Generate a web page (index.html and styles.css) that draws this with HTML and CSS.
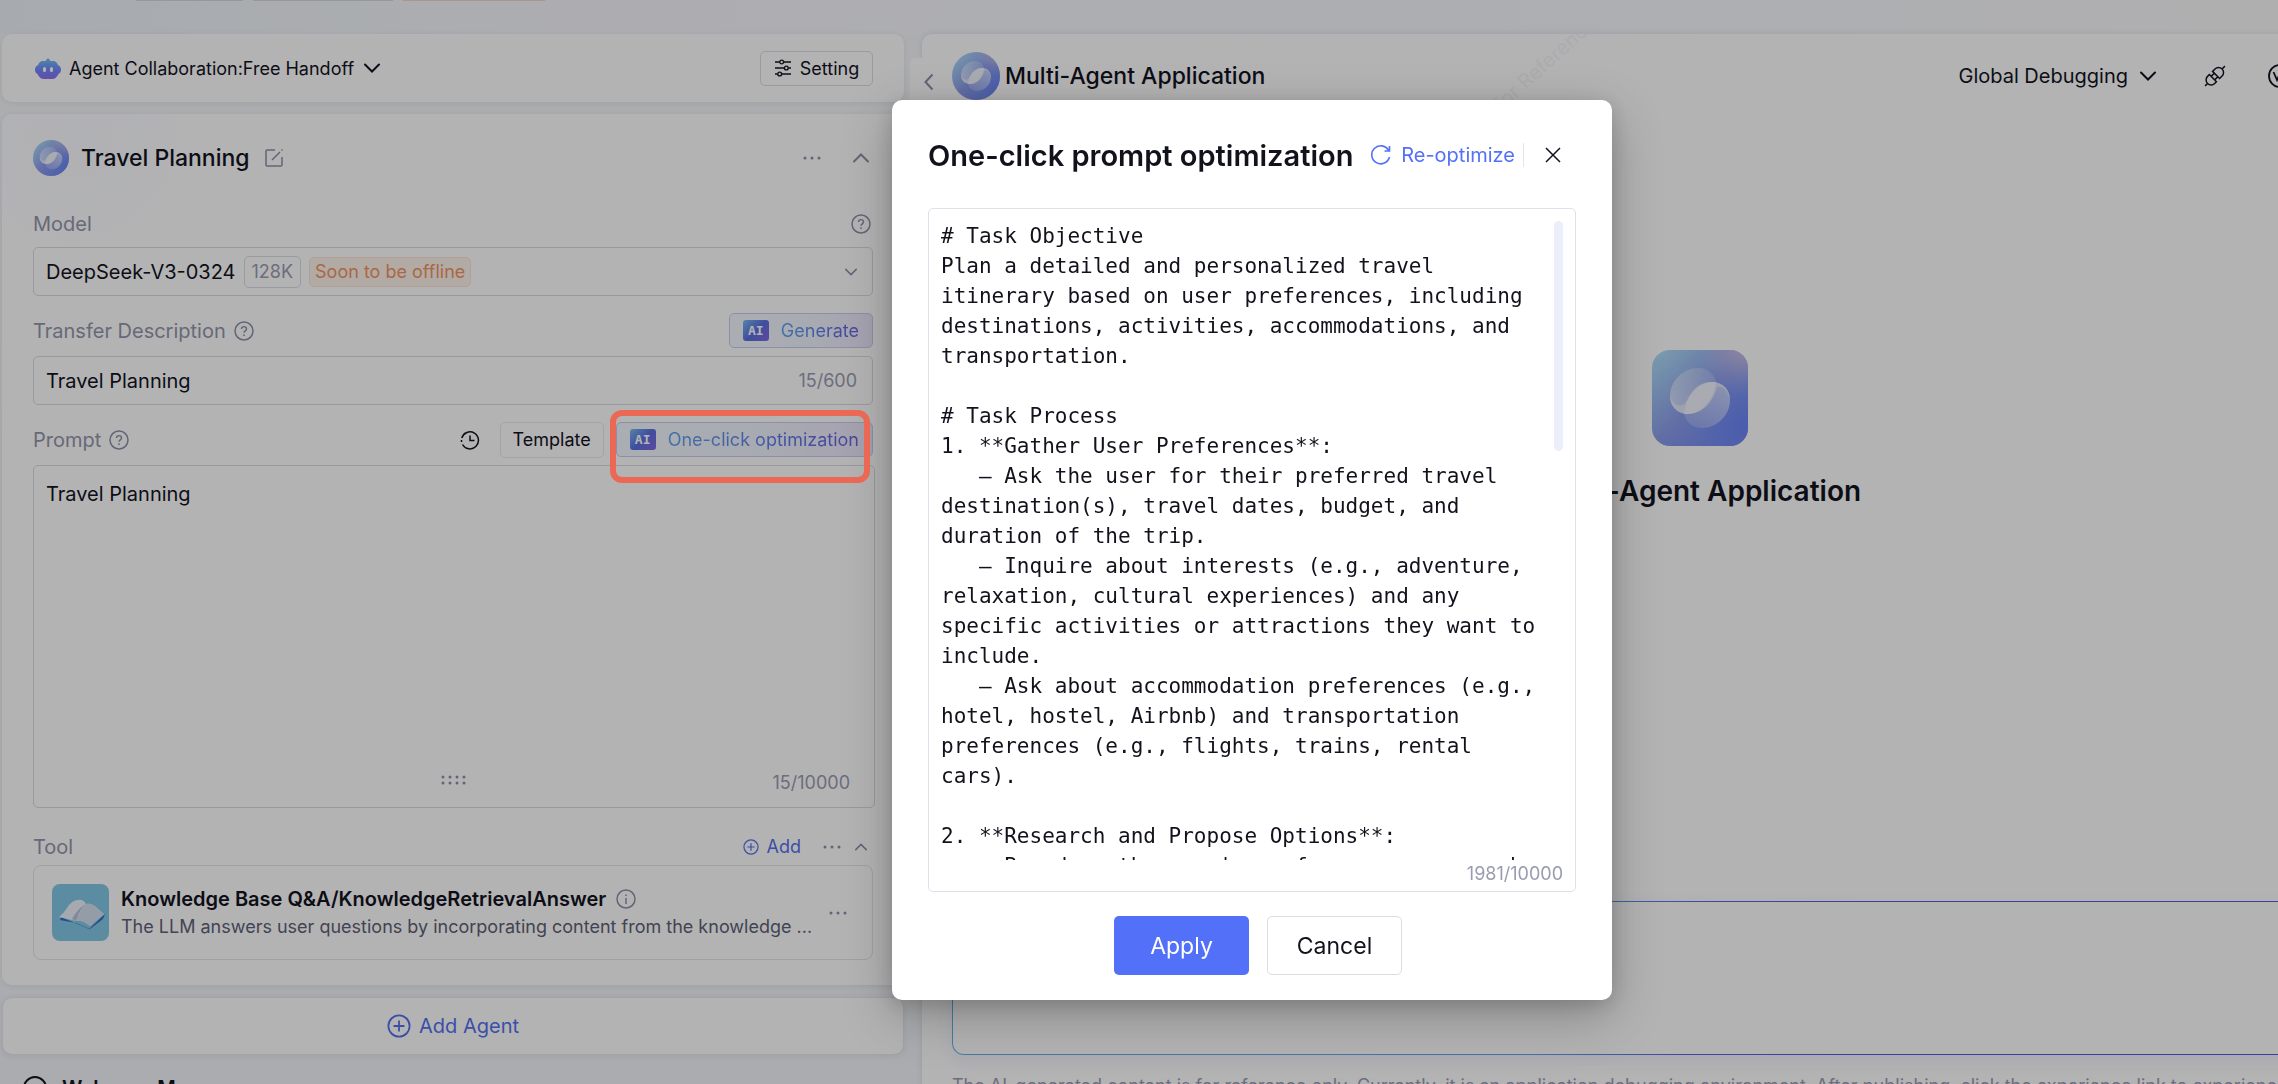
FILE: index.html
```html
<!DOCTYPE html>
<html lang="en">
<head>
  <meta charset="UTF-8">
  <title>Multi-Agent Application</title>
  <link rel="stylesheet" href="styles.css">
</head>
<body>

<!-- shared icons -->
<svg class="defs" aria-hidden="true">
  <defs>
    <linearGradient id="gBase" x1="0" y1="0" x2="1" y2="1">
      <stop offset="0" stop-color="#b0e4f8"/>
      <stop offset=".5" stop-color="#8c9dea"/>
      <stop offset="1" stop-color="#6a7cf2"/>
    </linearGradient>
    <radialGradient id="gPink" cx="1" cy="0" r=".5">
      <stop offset="0" stop-color="#cdbfe4"/>
      <stop offset="1" stop-color="#cdbfe4" stop-opacity="0"/>
    </radialGradient>
    <radialGradient id="gBlue" cx=".95" cy=".8" r=".75">
      <stop offset="0" stop-color="#6a83f6"/>
      <stop offset="1" stop-color="#7f9ff0" stop-opacity="0"/>
    </radialGradient>
    <linearGradient id="gUp" x1="0" y1="1" x2="1" y2="0">
      <stop offset="0" stop-color="#fff" stop-opacity=".6"/>
      <stop offset="1" stop-color="#fff" stop-opacity=".15"/>
    </linearGradient>
    <linearGradient id="gDown" x1="1" y1="0" x2="0" y2="1">
      <stop offset="0" stop-color="#fff" stop-opacity=".6"/>
      <stop offset="1" stop-color="#fff" stop-opacity=".15"/>
    </linearGradient>
    <linearGradient id="gBot" x1="0" y1="0" x2="0" y2="1">
      <stop offset="0" stop-color="#71b5f0"/>
      <stop offset=".5" stop-color="#7086ff"/>
      <stop offset="1" stop-color="#8a72ee"/>
    </linearGradient>
    <symbol id="logo" viewBox="0 0 96 96">
      <rect width="96" height="96" fill="url(#gBase)"/>
      <rect width="96" height="96" fill="url(#gPink)"/>
      <rect width="96" height="96" fill="url(#gBlue)"/>
      <path d="M64 32C62 24 56 18 46 18C31 18 18 31 18 46C18 56 25 64 36 64C50 64 62 50 64 32Z" fill="url(#gUp)"/>
      <path d="M32 64C34 72 40 78 50 78C65 78 78 65 78 50C78 40 71 32 60 32C46 32 34 46 32 64Z" fill="url(#gDown)"/>
      <path d="M18 46C18 56 25 64 36 64C52 64 62 50 65 37C70 35 76 40 78 50C78 40 71 32 60 32C47 32 40 40 35 50C31 58 22 58 18 46Z" fill="#fff" fill-opacity=".45"/>
      <path d="M64 32C62 50 50 64 36 64L32 64C34 46 46 32 60 32Z" fill="#fff" fill-opacity=".45"/>
    </symbol>
    <symbol id="help" viewBox="0 0 20 20">
      <circle cx="10" cy="10" r="9" fill="none" stroke="currentColor" stroke-width="1.5"/>
      <path d="M7.5 8C7.5 4.8 12.5 4.8 12.5 8C12.5 9.8 10 9.9 10 11.8" fill="none" stroke="currentColor" stroke-width="1.4"/>
      <circle cx="10" cy="14.2" r=".9" fill="currentColor"/>
    </symbol>
    <symbol id="down" viewBox="0 0 16 10">
      <path d="M1 1.5L8 8.5L15 1.5" fill="none" stroke="currentColor" stroke-width="2" stroke-linecap="round"/>
    </symbol>
    <symbol id="up" viewBox="0 0 16 10">
      <path d="M1 8.5L8 1.5L15 8.5" fill="none" stroke="currentColor" stroke-width="2" stroke-linecap="round"/>
    </symbol>
    <symbol id="dots" viewBox="0 0 18 4">
      <circle cx="2" cy="2" r="1.5"/><circle cx="9" cy="2" r="1.5"/><circle cx="16" cy="2" r="1.5"/>
    </symbol>
    <symbol id="plus" viewBox="0 0 24 24">
      <g fill="none" stroke="currentColor" stroke-width="1.8"><circle cx="12" cy="12" r="10.6"/><path d="M12 6.5V17.5M6.5 12H17.5"/></g>
    </symbol>
  </defs>
</svg>

<header class="topbar">
  <span class="top-tag tag-a"></span>
  <span class="top-tag tag-b"></span>
  <span class="top-tag tag-c"></span>
</header>

<main class="layout">
  <section class="left">
    <div class="card mode-bar">
      <button class="plain mode">
        <svg class="bot" viewBox="0 0 26 21"><path d="M11 2Q13 -1 15 2V4H11Z" fill="#71b5f0"/><path d="M8 3H18C21 3 22 5 23 7C25.5 8 26 10 26 12C26 14 25 15 23.5 16C22 19 20 21 17 21H9C6 21 4 19 2.5 16C1 15 0 14 0 12C0 10 .5 8 3 7C4 5 5 3 8 3Z" fill="url(#gBot)"/><rect x="8" y="9" width="3" height="5" rx="1.5" fill="#fff"/><rect x="15" y="9" width="3" height="5" rx="1.5" fill="#fff"/></svg>
        <span>Agent Collaboration:Free Handoff</span>
        <svg class="chev"><use href="#down"/></svg>
      </button>
      <button class="btn setting">
        <svg viewBox="0 0 18 18" width="18" height="18" fill="none" stroke="currentColor" stroke-width="1.4"><path d="M1 3H5.5M10 3H17M1 9H10M14.5 9H17M1 15H3.5M8 15H17"/><circle cx="7.7" cy="3" r="1.9"/><circle cx="12.3" cy="9" r="1.9"/><circle cx="5.7" cy="15" r="1.9"/></svg>
        Setting
      </button>
    </div>

    <div class="card agent">
      <div class="row agent-head">
        <svg class="avatar"><use href="#logo"/></svg>
        <h2>Travel Planning</h2>
        <svg class="muted" viewBox="0 0 20 20" width="20" height="20" fill="none" stroke="currentColor" stroke-width="1.5"><path d="M11 2H3Q2 2 2 3V17Q2 18 3 18H17Q18 18 18 17V9M8 12L16 4M17.5 2.5L18.5 1.5"/></svg>
        <span class="grow"></span>
        <button class="icon-btn" aria-label="More"><svg class="dots"><use href="#dots"/></svg></button>
        <button class="icon-btn" aria-label="Collapse"><svg class="chev"><use href="#up"/></svg></button>
      </div>

      <div class="row label-row model-label">
        <label for="model">Model</label>
        <span class="grow"></span>
        <svg class="help last"><use href="#help"/></svg>
      </div>
      <button class="field model" id="model">
        <span>DeepSeek-V3-0324</span>
        <span class="chip">128K</span>
        <span class="chip warn">Soon to be offline</span>
        <span class="grow"></span>
        <svg class="chev small"><use href="#down"/></svg>
      </button>

      <div class="row label-row">
        <label for="desc">Transfer Description</label>
        <svg class="help"><use href="#help"/></svg>
        <span class="grow"></span>
        <button class="ai-btn"><span class="ai">AI</span><span class="ai-text">Generate</span></button>
      </div>
      <div class="field desc">
        <input id="desc" type="text" value="Travel Planning">
        <span class="count">15/600</span>
      </div>

      <div class="row label-row">
        <label for="prompt">Prompt</label>
        <svg class="help"><use href="#help"/></svg>
        <span class="grow"></span>
        <button class="icon-btn history" aria-label="History"><svg viewBox="0 0 20 20" width="20" height="20" fill="none" stroke="currentColor" stroke-width="1.5"><path d="M2.5 14.5A8.5 8.5 0 1 0 1.8 8M3.3 5A8.5 8.5 0 0 1 5.5 2.8M1.5 10V12M10 5.5V10.5H14.5"/></svg></button>
        <button class="btn template">Template</button>
        <div class="optimize">
          <button class="ai-btn"><span class="ai">AI</span><span class="ai-text">One-click optimization</span></button>
          <span class="marker"></span>
        </div>
      </div>
      <div class="prompt-box">
        <textarea id="prompt">Travel Planning</textarea>
        <svg class="grip" viewBox="0 0 26 10" width="26" height="10"><g fill="currentColor"><circle cx="2" cy="2" r="1.5"/><circle cx="9" cy="2" r="1.5"/><circle cx="16" cy="2" r="1.5"/><circle cx="23" cy="2" r="1.5"/><circle cx="2" cy="8" r="1.5"/><circle cx="9" cy="8" r="1.5"/><circle cx="16" cy="8" r="1.5"/><circle cx="23" cy="8" r="1.5"/></g></svg>
        <span class="count">15/10000</span>
      </div>

      <div class="row tool-head">
        <span class="label">Tool</span>
        <span class="grow"></span>
        <button class="plain add"><svg width="16" height="16"><use href="#plus"/></svg>Add</button>
        <button class="icon-btn" aria-label="More tools"><svg class="dots"><use href="#dots"/></svg></button>
        <button class="icon-btn" aria-label="Collapse tools"><svg class="chev small"><use href="#up"/></svg></button>
      </div>
      <div class="tool">
        <svg class="book" viewBox="0 0 57 57">
          <rect width="57" height="57" rx="8" fill="#83c7e6"/>
          <path d="M9 33L37 45L53 30L51 35L38 45L24 39L8 36Z" fill="#2e72c4"/>
          <path d="M7 33Q12 29 15 24Q20 16 26 16Q31 15 34 20Q40 19 45 24L52 30L38 42Q31 36 24 37Q15 35 7 33Z" fill="#eef1fa"/>
          <path d="M34 20Q30 24 24 37Q31 36 38 42L52 30L45 24Q40 19 34 20Z" fill="#d3deee"/>
          <path d="M34 20Q28 25 24 37L20 35Q25 25 34 20Z" fill="#b9c3dc"/>
        </svg>
        <div class="tool-text">
          <div class="tool-name">Knowledge Base Q&amp;A/KnowledgeRetrievalAnswer
            <svg class="help" viewBox="0 0 20 20" fill="none" stroke="currentColor" stroke-width="1.5"><circle cx="10" cy="10" r="9"/><path d="M10 9V15M10 5.5V7"/></svg>
          </div>
          <div class="tool-desc">The LLM answers user questions by incorporating content from the knowledge ...</div>
        </div>
        <button class="icon-btn" aria-label="Tool options"><svg class="dots"><use href="#dots"/></svg></button>
      </div>
    </div>

    <button class="card add-agent"><svg width="24" height="24"><use href="#plus"/></svg>Add Agent</button>

    <div class="row welcome">
      <svg viewBox="0 0 24 24" width="24" height="24" fill="none" stroke="currentColor" stroke-width="2"><circle cx="12" cy="12" r="11"/><path d="M7 13Q12 19 17 11"/></svg>
      <h3>Welcome Message</h3>
    </div>
  </section>

  <section class="right">
    <button class="fold" aria-label="Hide panel"><svg viewBox="0 0 10 18" width="10" height="18"><path d="M8.5 1.5L1.5 9L8.5 16.5" fill="none" stroke="currentColor" stroke-width="2"/></svg></button>
    <div class="watermark"><span>For Reference Only</span></div>
    <div class="right-head">
      <svg class="avatar"><use href="#logo"/></svg>
      <h1>Multi-Agent Application</h1>
      <span class="grow"></span>
      <button class="plain debug">Global Debugging <svg class="chev"><use href="#down"/></svg></button>
      <button class="icon-btn dark" aria-label="Connections"><svg viewBox="-11 -11 22 22" width="22" height="22" fill="none" stroke="currentColor" stroke-width="1.5"><path transform="rotate(-45)" d="M-14 0H-10.5M-3 -5V5H-5.5A5 5 0 0 1 -5.5 -5ZM-3 -2.5H1.5M-3 2.5H1.5M1.5 -5V5H5A5 5 0 0 0 5 -5ZM10 0H14"/></svg></button>
      <button class="icon-btn dark variables" aria-label="Variables"><svg viewBox="0 0 24 24" width="24" height="24" fill="none" stroke="currentColor" stroke-width="1.8"><circle cx="12" cy="12" r="11"/><path d="M5.5 8L9 16L12 9L15 16L18.5 8"/></svg></button>
    </div>
    <div class="hero">
      <svg class="hero-logo"><use href="#logo"/></svg>
      <h2>Multi-Agent Application</h2>
    </div>
    <textarea class="chat" aria-label="Message"></textarea>
    <p class="note">The AI-generated content is for reference only. Currently, it is an application debugging environment. After publishing, click the experience link to experience the application.</p>
  </section>
</main>

<div class="mask">
  <div class="modal" role="dialog" aria-labelledby="dlgTitle">
    <div class="modal-head">
      <h2 id="dlgTitle">One-click prompt optimization</h2>
      <button class="plain redo"><svg viewBox="0 0 20 20" width="20" height="20" fill="none" stroke="currentColor" stroke-width="1.6"><path d="M18.5 12A9 9 0 1 1 17.5 5.2M18.5 1V6H13.5"/></svg>Re-optimize</button>
      <button class="icon-btn close" aria-label="Close"><svg viewBox="0 0 16 16" width="16" height="16"><path d="M1 1L15 15M15 1L1 15" stroke="currentColor" stroke-width="1.5"/></svg></button>
    </div>
    <div class="result">
      <textarea aria-label="Optimized prompt" spellcheck="false"># Task Objective
Plan a detailed and personalized travel itinerary based on user preferences, including destinations, activities, accommodations, and transportation.

# Task Process
1. **Gather User Preferences**:
   – Ask the user for their preferred travel destination(s), travel dates, budget, and duration of the trip.
   – Inquire about interests (e.g., adventure, relaxation, cultural experiences) and any specific activities or attractions they want to include.
   – Ask about accommodation preferences (e.g., hotel, hostel, Airbnb) and transportation preferences (e.g., flights, trains, rental cars).

2. **Research and Propose Options**:
   – Based on the user's preferences, research</textarea>
      <span class="thumb"></span>
      <span class="count">1981/10000</span>
    </div>
    <div class="actions">
      <button class="primary">Apply</button>
      <button class="btn">Cancel</button>
    </div>
  </div>
</div>

</body>
</html>
```
FILE: styles.css
```css
* {
  box-sizing: border-box;
}

body {
  margin: 0;
  height: 100vh;
  overflow: hidden;
  font-family: Inter, "Liberation Sans", sans-serif;
  font-size: 18px;
  color: #12121c;
  background: linear-gradient(#f6f7f9, #f3f5f8);
}

h1, h2, h3, p {
  margin: 0;
}

button, input, textarea {
  font: inherit;
  color: inherit;
}

button {
  display: flex;
  align-items: center;
  cursor: pointer;
  white-space: nowrap;
}

textarea {
  display: block;
  resize: none;
  outline: none;
  border: 0;
  padding: 0;
  background: none;
}

svg {
  flex: none;
}

.defs {
  position: absolute;
  width: 0;
  height: 0;
}

/* small pieces */
.row {
  display: flex;
  align-items: center;
}

.grow {
  flex: 1;
}

.plain, .icon-btn {
  border: 0;
  padding: 0;
  background: none;
}

.icon-btn, .muted, .help, .grip, .fold {
  color: #8d8fa6;
}

.icon-btn.dark {
  color: #12121c;
}

.btn {
  justify-content: center;
  border: 1px solid #dcdce4;
  border-radius: 5px;
  background: #fff;
}

.chev {
  width: 16px;
  height: 10px;
}

.chev.small {
  width: 12px;
  height: 8px;
}

.dots {
  width: 18px;
  height: 4px;
  fill: currentColor;
}

.help {
  width: 20px;
  height: 20px;
}

.count {
  font-size: 18px;
  color: #9a9bb0;
}

/* top */
.topbar {
  display: flex;
  gap: 10px;
  height: 34px;
  padding-left: 136px;
  background: linear-gradient(90deg, #eef4f8, #f6f7fb 25%, #f6f8fd 65%, #fafafa);
}

.top-tag {
  height: 1px;
  background: #d6d8de;
}

.tag-a { width: 107px; }
.tag-b { width: 140px; }
.tag-c { width: 142px; background: #f6d5c4; }

/* the preview panel runs on past the right edge */
.layout {
  display: grid;
  grid-template-columns: 902px minmax(0, 1fr);
  gap: 18px;
  width: calc(100% + 200px);
  padding-left: 2px;
}

.left {
  display: flex;
  flex-direction: column;
  gap: 12px;
}

.card {
  background: #fff;
  border: 0;
  border-radius: 10px;
  box-shadow: 0 1px 6px rgba(20, 30, 60, 0.08);
}

.mode-bar {
  display: flex;
  align-items: center;
  justify-content: space-between;
  height: 68px;
  padding: 0 31px 0 33px;
}

.mode {
  gap: 8px;
}

.mode .chev {
  margin-left: 2px;
}

.bot {
  width: 26px;
  height: 21px;
}

.setting {
  gap: 8px;
  width: 113px;
  height: 35px;
}

.agent {
  height: 871px;
  padding: 0 31px;
  background: radial-gradient(circle at 70px 20px, #fbfcff, #fff 120px);
}

.agent-head {
  height: 88px;
}

.avatar {
  width: 36px;
  height: 36px;
  border-radius: 50%;
}

.agent-head h2 {
  margin: 0 14px 0 12px;
  font-size: 23px;
  font-weight: 500;
}

.agent-head .icon-btn + .icon-btn {
  margin: 0 4px 0 32px;
}

label, .label {
  font-size: 20px;
  color: #9395a9;
}

.label-row {
  height: 60px;
  padding-top: 9px;
}

.model-label {
  height: 45px;
  padding: 0 0 2px;
}

.label-row .help {
  margin-left: 8px;
}

.label-row .help.last {
  margin-right: 2px;
}

.field {
  display: flex;
  align-items: center;
  width: 100%;
  height: 49px;
  padding: 0 15px 0 12px;
  border: 1px solid #dadbe2;
  border-radius: 5px;
  background: #fff;
  font-size: 20px;
}

.model .chev {
  color: #8d8fa6;
}

.chip {
  height: 32px;
  margin-left: 8px;
  padding: 0 7px;
  border: 1px solid #dcdce6;
  border-radius: 5px;
  font-size: 18px;
  line-height: 30px;
  color: #9a9bb0;
}

.chip.warn {
  height: 30px;
  line-height: 28px;
  padding: 0 5px;
  color: #f2935f;
  background: #fdf3ea;
  border-color: #fbe3d3;
}

.desc input {
  flex: 1;
  border: 0;
  padding: 0;
  outline: none;
  background: none;
}

.ai-btn {
  gap: 12px;
  height: 35px;
  padding: 0 13px;
  border: 1px solid #c6ccf0;
  border-radius: 5px;
  background: linear-gradient(90deg, #f3f8fd, #f0f2fc 60%, #ebe6f8);
}

.ai {
  width: 26px;
  height: 21px;
  border-radius: 3px;
  font: bold 13px/21px "DejaVu Sans Mono", monospace;
  color: #fff;
  background: linear-gradient(135deg, #7cb9ec, #596fe0 50%, #8468e0);
}

.ai-text {
  color: transparent;
  background: linear-gradient(90deg, #5fa4ea, #5c78e8 60%, #6a62dc);
  background-clip: text;
}

.history {
  margin-right: 20px;
  color: #12121c;
}

.template {
  width: 104px;
  height: 36px;
  margin-right: 12px;
  border-color: #e8e8ee;
}

.optimize {
  position: relative;
}

.marker {
  position: absolute;
  z-index: 20;
  top: -12px;
  left: -6px;
  right: 3px;
  height: 73px;
  border: 6px solid #eb6855;
  border-radius: 12px;
  pointer-events: none;
}

.prompt-box {
  position: relative;
  height: 343px;
  margin-right: -2px;
  padding: 15px 12px;
  border: 1px solid #dadbe2;
  border-radius: 5px;
}

.prompt-box textarea {
  width: 100%;
  height: 270px;
  font-size: 20px;
  line-height: 26px;
}

.grip {
  position: absolute;
  left: 50%;
  bottom: 22px;
  margin-left: -13px;
}

.prompt-box .count {
  position: absolute;
  right: 24px;
  bottom: 14px;
}

.tool-head {
  height: 57px;
  padding-top: 20px;
}

.add {
  gap: 8px;
  margin-right: 22px;
  color: #5470ee;
}

.tool-head .icon-btn + .icon-btn {
  margin: 0 6px 0 14px;
}

.tool {
  display: flex;
  align-items: center;
  height: 95px;
  padding: 0 25px 0 18px;
  border: 1px solid #e4e4ea;
  border-radius: 8px;
}

.book {
  width: 57px;
  height: 57px;
}

.tool-text {
  flex: 1;
  margin-left: 12px;
}

.tool-name {
  display: flex;
  align-items: center;
  gap: 10px;
  font-size: 20px;
  font-weight: 600;
  line-height: 28px;
}

.tool-desc {
  line-height: 28px;
  white-space: nowrap;
  color: #5d5f74;
}

.add-agent {
  justify-content: center;
  gap: 8px;
  height: 58px;
  border: 1px solid #e8e8ee;
  font-size: 20px;
  color: #5470ee;
}

.welcome {
  gap: 15px;
  padding: 9px 21px;
}

.welcome h3 {
  font-size: 20px;
  font-weight: 600;
}

/* preview */
.right {
  position: relative;
  height: 1060px;
  padding: 0 30px;
  border-radius: 10px 0 0 0;
  background: #fff;
  box-shadow: 0 0 6px rgba(20, 30, 60, 0.1);
}

.fold {
  position: absolute;
  top: 24px;
  left: -12px;
  width: 36px;
  height: 48px;
  padding: 0 0 0 14px;
  border: 0;
  border-radius: 5px 0 0 5px;
  background: #fff;
}

.watermark {
  position: absolute;
  inset: 0;
  overflow: hidden;
  pointer-events: none;
}

.watermark span {
  position: absolute;
  top: 60px;
  left: 580px;
  font-size: 20px;
  color: #f5f5f7;
  transform: rotate(-42deg);
  transform-origin: left bottom;
}

.right-head {
  display: flex;
  align-items: center;
  height: 84px;
  padding-right: 156px;
}

.right-head .avatar {
  width: 48px;
  height: 48px;
}

.right-head h1 {
  margin-left: 5px;
  font-size: 23px;
  font-weight: 500;
}

.debug {
  gap: 12px;
  font-size: 20px;
}

.right-head .icon-btn {
  margin-left: 48px;
}

.right-head .variables {
  margin-left: 42px;
}

.hero {
  display: flex;
  flex-direction: column;
  align-items: center;
  gap: 26px;
  height: 783px;
  padding-top: 232px;
}

.hero-logo {
  width: 96px;
  height: 96px;
  border-radius: 18px;
}

.hero h2 {
  font-size: 28px;
  font-weight: 600;
  line-height: 38px;
}

.chat {
  width: 100%;
  height: 154px;
  border: 1px solid transparent;
  border-radius: 12px;
  background: linear-gradient(#fff, #fff) padding-box, linear-gradient(100deg, #66b0f0, #66a4ee 40%, #5a64e0 50%, #5a58dc 62%) border-box;
  box-shadow: 0 6px 16px rgba(60, 80, 160, 0.08);
}

.note {
  margin-top: 18px;
  line-height: 26px;
  white-space: nowrap;
  color: #9a9bb0;
}

/* dialog */
.mask {
  position: fixed;
  z-index: 10;
  inset: 0;
  display: flex;
  flex-direction: column;
  align-items: center;
  padding: 100px 0 0;
  background: rgba(2, 2, 8, 0.3);
}

.modal {
  width: 720px;
  margin-right: -226px;
  padding: 24px 36px 25px;
  border-radius: 10px;
  background: #fff;
  box-shadow: 0 16px 50px rgba(0, 0, 0, 0.25), 0 4px 20px rgba(0, 0, 0, 0.15);
}

.modal-head {
  display: flex;
  align-items: center;
  height: 62px;
  margin-bottom: 22px;
}

.modal-head h2 {
  flex: 1;
  font-size: 29px;
  font-weight: 600;
  white-space: nowrap;
}

.redo {
  gap: 10px;
  padding-right: 8px;
  border-right: 1px solid #e4e4ec;
  font-size: 20px;
  line-height: 24px;
  color: #5571f6;
}

.close {
  margin: 0 15px 0 21px;
  color: #12121c;
}

.result {
  position: relative;
  height: 684px;
  padding: 12px;
  border: 1px solid #dfe0e8;
  border-radius: 5px;
}

.result textarea {
  width: 606px;
  height: 639px;
  overflow: hidden;
  font: 21px/30px "DejaVu Sans Mono", monospace;
}

.thumb {
  position: absolute;
  top: 12px;
  right: 12px;
  width: 9px;
  height: 230px;
  border-radius: 5px;
  background: #eceffa;
}

.result .count {
  position: absolute;
  right: 12px;
  bottom: 7px;
}

.actions {
  display: flex;
  justify-content: center;
  gap: 18px;
  margin-top: 24px;
  padding-left: 12px;
}

.actions button {
  justify-content: center;
  width: 135px;
  height: 59px;
  border-radius: 5px;
  font-size: 23px;
}

.primary {
  border: 0;
  color: #fff;
  background: #5270f8;
}
```
